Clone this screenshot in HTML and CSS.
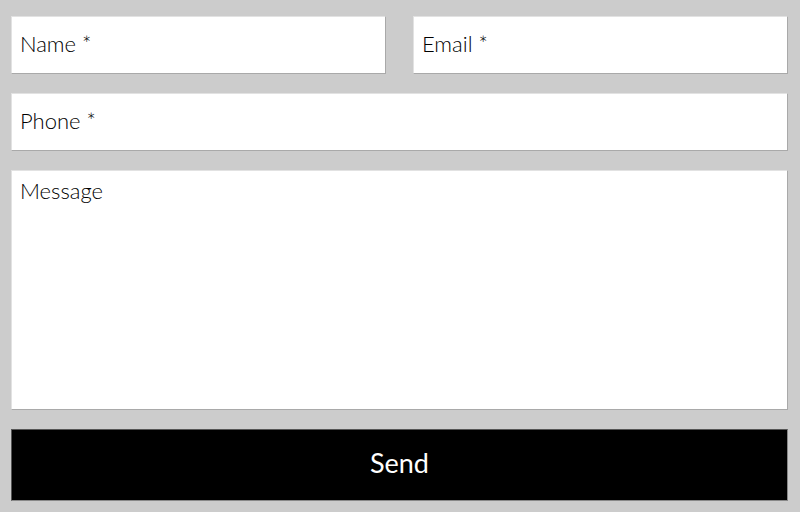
FILE: index.html
```
<!DOCTYPE html>
<html>
<head>
<meta charset="utf-8">
<link rel="stylesheet" href="styles.css">
</head>
<body>
<form class="form">
  <div class="row two">
    <input class="field" type="text" placeholder="Name *">
    <input class="field" type="email" placeholder="Email *">
  </div>
  <div class="row">
    <input class="field" type="tel" placeholder="Phone *">
  </div>
  <div class="row">
    <textarea class="field area" placeholder="Message"></textarea>
  </div>
  <div class="row">
    <button class="send" type="button">Send</button>
  </div>
</form>
</body>
</html>
```
FILE: styles.css
```
html, body {
  margin: 0;
  padding: 0;
  background: #cccccc;
}
body {
  width: 800px;
  height: 512px;
  overflow: hidden;
}
.form {
  padding: 16px 12px 0 11px;
  display: flex;
  flex-direction: column;
  gap: 19px;
}
.row {
  display: flex;
}
.row.two {
  gap: 27px;
}
.field {
  flex: 1;
  min-width: 0;
  box-sizing: border-box;
  height: 58px;
  margin: 0;
  padding: 0 8px 3px;
  background: #fff;
  border: 1px solid;
  border-color: #e2e2e2 #a9a9a9 #a9a9a9 #e2e2e2;
  border-radius: 0;
  font-family: "Lato", "Open Sans", sans-serif;
  font-weight: 300;
  font-size: 22px;
  color: #000;
  outline: none;
}
.field::placeholder {
  color: #000;
  opacity: 1;
}
.area {
  height: 240px;
  padding-top: 6px;
  resize: none;
  font-family: "Lato", "Open Sans", sans-serif;
}
.send {
  flex: 1;
  height: 72px;
  margin: 0;
  background: #000;
  color: #fff;
  border: 1px solid;
  border-color: #555 #888 #888 #555;
  border-radius: 0;
  font-family: "Lato", "Open Sans", sans-serif;
  font-size: 27px;
  font-weight: 400;
  padding: 0 0 6px;
}
```
